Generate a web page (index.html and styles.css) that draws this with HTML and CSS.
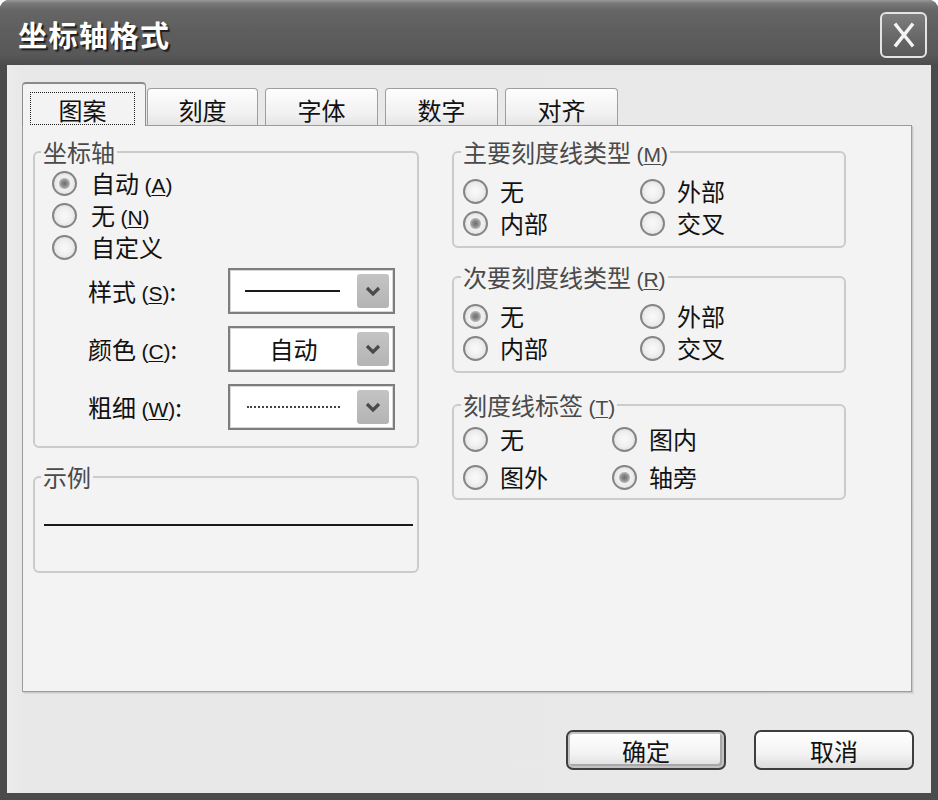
FILE: index.html
```html
<!DOCTYPE html>
<html lang="zh-CN">
<head>
<meta charset="utf-8">
<title>坐标轴格式</title>
<link rel="stylesheet" href="styles.css">
</head>
<body>
<div class="window">
  <div class="titlebar">
    <span class="title">坐标轴格式</span>
    <div class="close">
      <svg width="30" height="30" viewBox="0 0 30 30"><path d="M7 5 L23 25 M23 5 L7 25" stroke="#f4f4f4" stroke-width="3.4" stroke-linecap="square" fill="none"/></svg>
    </div>
  </div>
  <div class="client">
    <div class="tabs">
      <div class="tab selected"><span class="focus">图案</span></div>
      <div class="tab t2">刻度</div>
      <div class="tab">字体</div>
      <div class="tab">数字</div>
      <div class="tab">对齐</div>
    </div>
    <div class="panel">
      <div class="col-left">
        <fieldset class="group g-axis">
          <legend>坐标轴</legend>
          <div class="axis-body">
            <div class="radio-row"><span class="radio checked"></span><span>自动 <span class="acc">(<u>A</u>)</span></span></div>
            <div class="radio-row"><span class="radio"></span><span>无 <span class="acc">(<u>N</u>)</span></span></div>
            <div class="radio-row"><span class="radio"></span><span>自定义</span></div>
            <div class="combo-rows">
              <div class="combo-row">
                <span class="clabel">样式 <span class="acc">(<u>S</u>)</span>:</span>
                <div class="combo"><div class="cval"><span class="solid-line"></span></div><div class="dd"><svg width="18" height="14" viewBox="0 0 18 14"><path d="M3 4 L9 10 L15 4" stroke="#4a4a4a" stroke-width="3.2" fill="none"/></svg></div></div>
              </div>
              <div class="combo-row">
                <span class="clabel">颜色 <span class="acc">(<u>C</u>)</span>:</span>
                <div class="combo"><div class="cval center">自动</div><div class="dd"><svg width="18" height="14" viewBox="0 0 18 14"><path d="M3 4 L9 10 L15 4" stroke="#4a4a4a" stroke-width="3.2" fill="none"/></svg></div></div>
              </div>
              <div class="combo-row">
                <span class="clabel">粗细 <span class="acc">(<u>W</u>)</span>:</span>
                <div class="combo"><div class="cval"><span class="dot-line"></span></div><div class="dd"><svg width="18" height="14" viewBox="0 0 18 14"><path d="M3 4 L9 10 L15 4" stroke="#4a4a4a" stroke-width="3.2" fill="none"/></svg></div></div>
              </div>
            </div>
          </div>
        </fieldset>
        <fieldset class="group g-sample">
          <legend>示例</legend>
          <div class="sample-line"></div>
        </fieldset>
      </div>
      <div class="col-right">
        <fieldset class="group g-r g-major">
          <legend>主要刻度线类型 <span class="acc">(<u>M</u>)</span></legend>
          <div class="rgrid wide">
            <div class="radio-row"><span class="radio"></span><span>无</span></div>
            <div class="radio-row"><span class="radio"></span><span>外部</span></div>
            <div class="radio-row"><span class="radio checked"></span><span>内部</span></div>
            <div class="radio-row"><span class="radio"></span><span>交叉</span></div>
          </div>
        </fieldset>
        <fieldset class="group g-r g-minor">
          <legend>次要刻度线类型 <span class="acc">(<u>R</u>)</span></legend>
          <div class="rgrid wide">
            <div class="radio-row"><span class="radio checked"></span><span>无</span></div>
            <div class="radio-row"><span class="radio"></span><span>外部</span></div>
            <div class="radio-row"><span class="radio"></span><span>内部</span></div>
            <div class="radio-row"><span class="radio"></span><span>交叉</span></div>
          </div>
        </fieldset>
        <fieldset class="group g-r g-label">
          <legend>刻度线标签 <span class="acc">(<u>T</u>)</span></legend>
          <div class="rgrid narrow">
            <div class="radio-row"><span class="radio"></span><span>无</span></div>
            <div class="radio-row"><span class="radio"></span><span>图内</span></div>
            <div class="radio-row"><span class="radio"></span><span>图外</span></div>
            <div class="radio-row"><span class="radio checked"></span><span>轴旁</span></div>
          </div>
        </fieldset>
      </div>
    </div>
    <div class="buttons">
      <button class="btn default">确定</button>
      <button class="btn">取消</button>
    </div>
  </div>
</div>
</body>
</html>
```

FILE: styles.css
```css
* { box-sizing: border-box; }
html, body { margin: 0; padding: 0; background: #ffffff; }
body {
  font-family: "Noto Sans CJK SC", "Noto Sans", sans-serif;
  font-size: 24px;
  color: #111;
}
.window {
  width: 938px;
  height: 800px;
  display: flex;
  flex-direction: column;
  background: #4b4b4b;
  border-radius: 9px 9px 0 0;
  overflow: hidden;
}
.titlebar {
  height: 65px;
  flex: none;
  display: flex;
  align-items: center;
  justify-content: space-between;
  padding: 0 11px 0 18px;
  background: linear-gradient(#9a9a9a 0, #7a7a7a 3px, #666 10px, #5e5e5e 30px, #585858 55px, #4c4c4c 65px);
}
.title {
  color: #fff;
  font-weight: bold;
  font-size: 29px;
  line-height: 1;
  letter-spacing: 1.5px;
  text-shadow: 2px 2px 1px #1e1e1e;
  margin-top: 4px;
}
.close {
  width: 47px;
  height: 46px;
  margin-top: 5px;
  border: 2px solid #e4e4e4;
  border-radius: 6px;
  background: linear-gradient(#7e7e7e, #666 60%, #5a5a5a);
  display: flex;
  align-items: center;
  justify-content: center;
}
.client {
  flex: 1;
  margin: 0 7px 7px 7px;
  background: linear-gradient(90deg, #ececec 0, #e8e8e8 15px, #e9e9e9 100%);
  padding: 17px 19px 0 15px;
  display: flex;
  flex-direction: column;
}
.tabs {
  display: flex;
  align-items: flex-end;
  height: 44px;
  margin-bottom: -1px;
  position: relative;
  z-index: 1;
}
.tab {
  width: 113px;
  height: 37px;
  margin-bottom: 1px;
  margin-left: 7px;
  border: 1px solid #9e9e9e;
  border-bottom: none;
  border-radius: 4px 4px 0 0;
  background: linear-gradient(#fdfdfd, #f1f1f1 70%, #e4e4e4);
  display: flex;
  justify-content: center;
  align-items: center;
  padding-top: 5px;
  line-height: 1;
}
.tab.t2 { margin-left: 1px; width: 111px; }
.tab.selected {
  width: 124px;
  height: 44px;
  margin: 0;
  border-color: #8c8c8c;
  border-top: 2px solid #8a8a8a;
  background: #f3f3f3;
  padding: 8px 10px 1px 7px;
  align-items: stretch;
}
.focus {
  flex: 1;
  border: 1px dotted #222;
  display: flex;
  align-items: center;
  justify-content: center;
  padding-top: 3px;
}
.panel {
  height: 567px;
  flex: none;
  background: #f3f3f3;
  border: 1px solid #9c9c9c;
  box-shadow: 1px 1px 0 #c9c9c9, 2px 2px 0 #dadada;
  display: flex;
  gap: 33px;
  padding: 12px 0 0 10px;
}
.col-left { width: 386px; display: flex; flex-direction: column; }
.col-right { width: 394px; display: flex; flex-direction: column; }
.group {
  margin: 0;
  padding: 0;
  border: 2px solid #cbcbcb;
  border-radius: 6px;
  min-width: 0;
}
.group legend {
  padding: 0 2px;
  margin-left: 6px;
  line-height: 28px;
  height: 28px;
  color: #4a4a4a;
}
.g-axis { height: 310px; }
.g-sample { height: 110px; margin-top: 15px; }
.axis-body { padding: 1px 0 0 17px; }
.radio-row {
  display: flex;
  align-items: center;
  height: 32px;
  line-height: 1;
}
.radio {
  width: 25px;
  height: 25px;
  flex: none;
  border-radius: 50%;
  border: 2px solid #858585;
  background: radial-gradient(circle at 50% 50%, #fafafa 0, #f0f0f0 45%, #d9d9d9 100%);
  margin-right: 14px;
}
.radio.checked {
  background:
    radial-gradient(circle at 50% 50%, #6f6f6f 0, #8c8c8c 3px, #b4b4b4 5px, rgba(255,255,255,0) 6px),
    radial-gradient(circle at 50% 50%, #fafafa 0, #f0f0f0 45%, #d9d9d9 100%);
}
.acc { font-family: "Liberation Sans", sans-serif; font-size: 21px; }
.acc u { text-decoration-thickness: 1px; text-underline-offset: 2px; }
.combo-rows {
  margin-top: 5px;
  display: flex;
  flex-direction: column;
  gap: 12px;
}
.combo-row { display: flex; align-items: center; height: 46px; }
.clabel { width: 140px; margin-left: 36px; line-height: 1; }
.combo {
  width: 167px;
  height: 46px;
  border: 2px solid #7d7d7d;
  box-shadow: inset 0 0 0 1px #d8d8d8;
  background: #fff;
  display: flex;
  align-items: center;
  padding: 4px 4px 4px 15px;
}
.cval { flex: 1; display: flex; align-items: center; height: 100%; }
.cval.center { justify-content: center; margin-left: -15px; line-height: 1; }
.solid-line { width: 95px; height: 2px; background: #1a1a1a; }
.dot-line { width: 93px; height: 0; border-top: 2px dotted #444; margin-left: 2px; }
.dd {
  width: 32px;
  height: 34px;
  border-radius: 3px;
  background: linear-gradient(#c4c4c4, #b4b4b4);
  display: flex;
  align-items: center;
  justify-content: center;
}
.sample-line {
  margin: 33px 4px 0 9px;
  height: 2px;
  background: #1a1a1a;
}
.g-r legend { margin-left: 7px; }
.g-major { height: 110px; }
.g-minor { height: 110px; margin-top: 15px; }
.g-label { height: 109px; margin-top: 18px; }
.rgrid { display: grid; padding-left: 9px; }
.rgrid .radio { margin-right: 12px; }
.rgrid.wide { grid-template-columns: 177px 1fr; padding-top: 9px; }
.rgrid.narrow { grid-template-columns: 149px 1fr; padding-top: 1px; }
.rgrid.narrow .radio-row { height: 38px; }
.buttons {
  display: flex;
  justify-content: flex-end;
  gap: 28px;
  margin-top: 38px;
  margin-right: -2px;
}
.btn {
  width: 160px;
  height: 40px;
  font-family: "Noto Sans CJK SC", sans-serif;
  font-size: 24px;
  line-height: 1;
  color: #111;
  border: 2px solid #3e3e3e;
  border-radius: 7px;
  background: linear-gradient(#ffffff, #f3f3f3 60%, #dcdcdc);
  padding: 2px 0 0;
}
.btn.default { box-shadow: inset 0 0 0 2px #c2c2c2, inset -2px -2px 0 2px #a8a8a8; }
```
